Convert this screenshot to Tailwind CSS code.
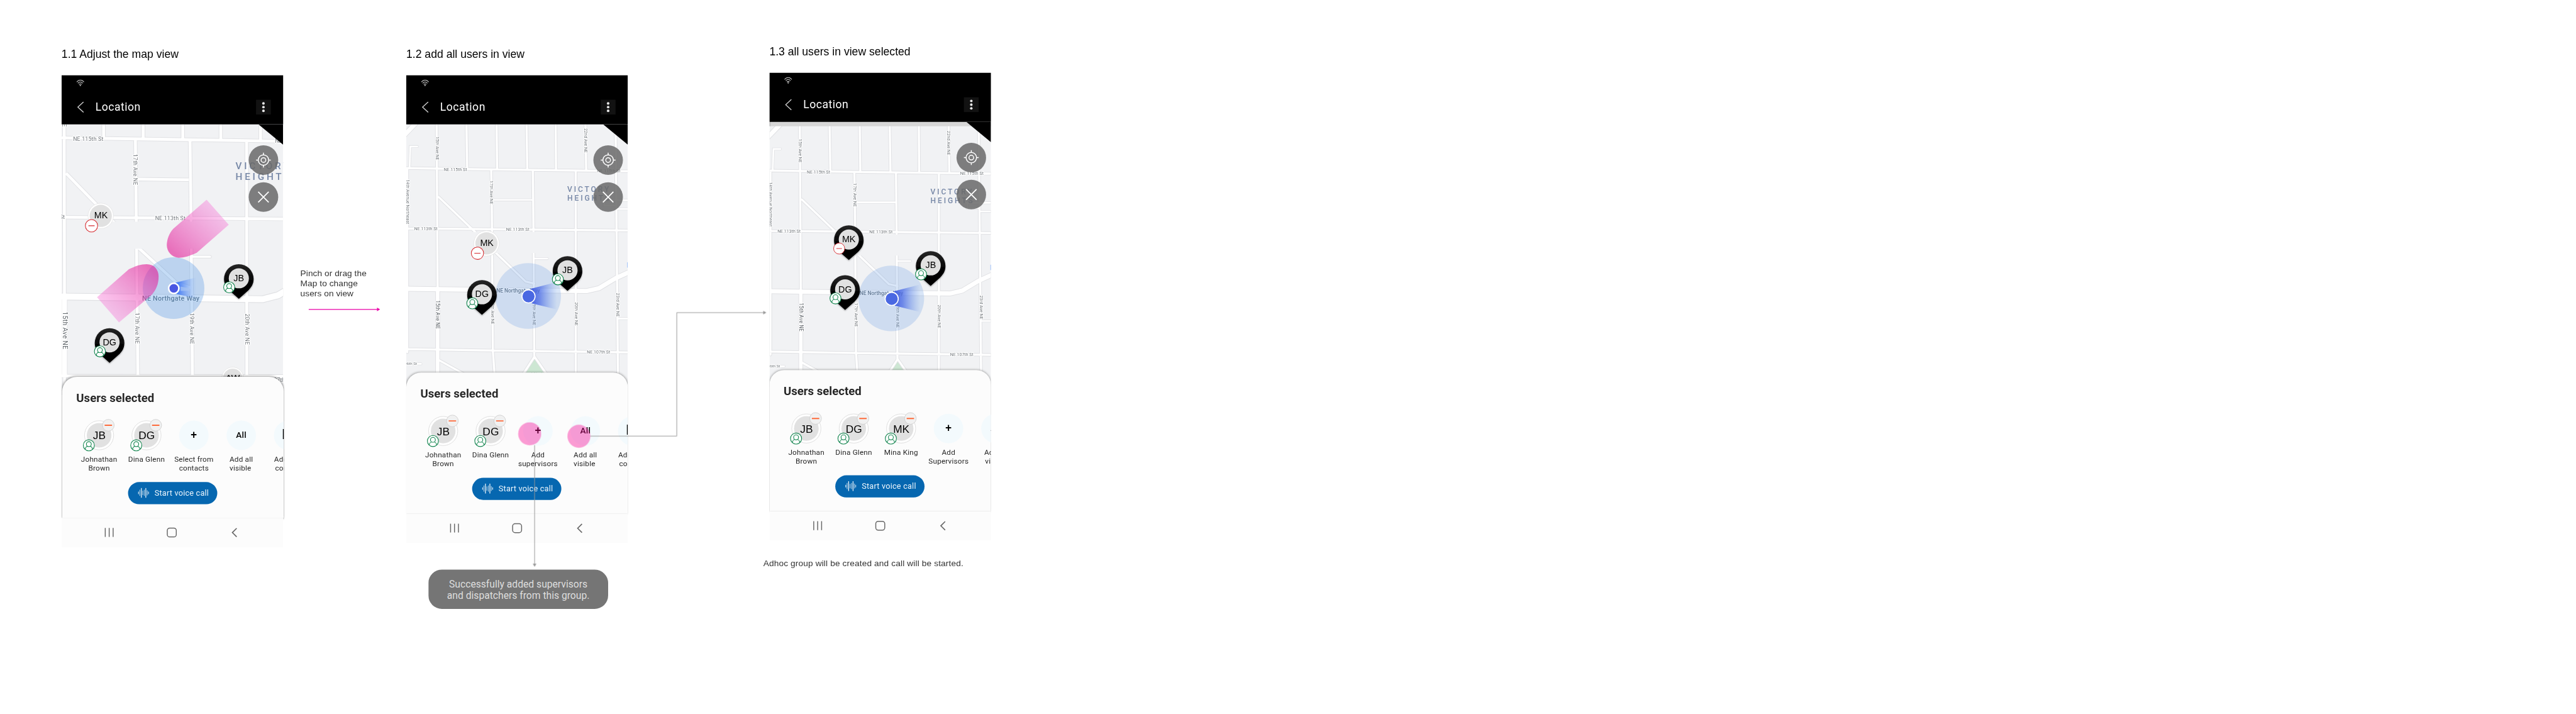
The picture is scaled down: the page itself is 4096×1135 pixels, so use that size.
<!DOCTYPE html>
<html lang="en">
<head>
<meta charset="utf-8">
<title>Location – add users flow</title>
<script src="https://cdn.jsdelivr.net/npm/@tailwindcss/browser@4"></script>
</head>
<body class="bg-white">
<svg class="absolute w-0 h-0" aria-hidden="true">
  <defs>
    <linearGradient id="pinFill" x1="0" y1="0" x2="0" y2="1"><stop offset="0" stop-color="#262626"/><stop offset=".55" stop-color="#000"/></linearGradient>
    <linearGradient id="beamA" x1="0" x2="1" y1="0" y2="0"><stop offset="0" stop-color="#2f6bf5"/><stop offset="1" stop-color="#7fa9f5" stop-opacity="0"/></linearGradient>
    <linearGradient id="beamB" x1="0" x2="1" y1="0" y2="0"><stop offset="0" stop-color="#4560e2"/><stop offset=".35" stop-color="#4f6ee6" stop-opacity=".75"/><stop offset="1" stop-color="#6f97ea" stop-opacity="0"/></linearGradient>
    <linearGradient id="pinkUp" x1="0" y1="1" x2="1" y2="0"><stop offset=".1" stop-color="#e21995" stop-opacity=".6"/><stop offset=".8" stop-color="#f673d6" stop-opacity=".4"/></linearGradient>
    <linearGradient id="pinkDown" x1="1" y1="0" x2="0" y2="1"><stop offset=".1" stop-color="#e21995" stop-opacity=".6"/><stop offset=".8" stop-color="#f673d6" stop-opacity=".4"/></linearGradient>
    <filter id="soft" x="-30%" y="-30%" width="160%" height="170%"><feDropShadow dx="0" dy="4" stdDeviation="4" flood-color="#000" flood-opacity=".35"/></filter>

    <g id="person">
      <circle r="27" fill="#fff" stroke="#13854f" stroke-width="3.4"/>
      <g fill="none" stroke="#13854f" stroke-width="3.4"><circle cy="-6" r="12"/><path d="M-18 20C-17 9-10 5-6 5M18 20C17 9 10 5 6 5"/></g>
    </g>
    <g id="pin">
      <path filter="url(#soft)" fill="url(#pinFill)" d="M0-72A72 72 0 0 1 72 0C72 28 58 44 44 58L0 97L-44 58C-58 44-72 28-72 0A72 72 0 0 1 0-72Z"/>
      <circle cy="-3" r="49" fill="#e1e1e1"/>
    </g>
    <g id="mute"><circle r="30" fill="#fff" stroke="#d62b30" stroke-width="3.2"/><path d="M-15 0H15" stroke="#d62b30" stroke-width="3.2"/></g>
    <g id="dot-avatar"><circle r="62" fill="#fff" stroke="#dedede" stroke-width="2"/><circle r="54" fill="#e1e1e1"/></g>
    <g id="avatar">
      <circle r="71" fill="#fff" stroke="#dedede" stroke-width="3"/><circle r="60" fill="#e1e1e1"/>
      <use href="#person" x="-50" y="49"/>
    </g>
    <g id="remove"><circle cx="45" cy="-49" r="28.5" fill="#f1f1f1" stroke="#cbcbcb" stroke-width="2.5"/><path d="M27-49H63" stroke="#fd6b3c" stroke-width="6"/></g>
    <g id="wifi" fill="none" stroke="#c8c8c8" stroke-width="1.1"><path d="M.6 4.2C4-.1 9.200-.1 12.400 4.200M2.600 6.300C5 3.300 8 3.300 10.400 6.300M4.500 8.200C5.700 6.800 7.300 6.800 8.500 8.200"/><circle cx="6.500" cy="9.700" r=".5" fill="#ddd"/></g>
    <g id="target" fill="none" stroke="#fff" stroke-width="1.5"><circle r="8.500"/><circle r="3.800"/><path d="M0-12V-8.500M0 8.500V12M-12 0H-8.500M8.500 0H12"/></g>
    <g id="waves" stroke="#fff" stroke-width="1.200"><path d="M1 6.500V10.500M17.400 6.500V10.500" stroke-opacity=".9"/><path d="M3.200 3.500V13.500M8 5V12M10.500 3.500V13.500M15.200 4.500V12.500" stroke-opacity=".65"/><path d="M5.700.5V16.500M12.900.5V16.500"/></g>
    <g id="nav-icons" fill="none" stroke="#676767" stroke-width="1.500"><path d="M72 16.500V31M78.400 16.500V31M84.800 16.500V31"/><rect x="172.800" y="16.700" width="14.600" height="14.400" rx="4"/><path d="M285.500 17L278.500 24L285.500 31" stroke-width="1.700"/></g>

    <path id="m1-roads" d="M13 0L15 1300M205 0V66M398 0V70M591 0V74M776 0V78M970 0V80M0 65L380 71L1080 82M360 76L364 450L372 1240M626 80L631 460L638 1240M902 84L903 1240M370 267L620 270M22 238L380 606L560 772L630 796M0 452L1080 461M0 1226L1080 1228"/>
    <path id="m1-main" d="M0 839L640 847L980 852L1055 833L1090 812"/>
    <path id="m1-stub" d="M633 645H724"/>
    <g id="m1-labels" font-family="Roboto, sans-serif" font-size="27">
      <text x="56" y="81" textLength="148">NE 115th St</text><text x="1040" y="90">NE</text>
      <text x="456" y="466" textLength="148">NE 113th St</text><text x="15" y="461" text-anchor="end">NE 113th St</text>
      <text transform="translate(3 -4) rotate(90)">E</text>
      <text transform="translate(351 144) rotate(90)" textLength="152">17th Ave NE</text>
      <text transform="translate(359 917) rotate(90)" textLength="152">17th Ave NE</text>
      <text transform="translate(625 919) rotate(90)" textLength="152">19th Ave NE</text>
      <text transform="translate(895 922) rotate(90)" textLength="152">20th Ave NE</text>
      <text transform="translate(5 912) rotate(90)" textLength="184" font-size="32" fill="#5f656a">15th Ave NE</text>
      <text x="393" y="859" textLength="279" font-size="33" font-weight="500" fill="#5f6f7b">NE Northgate Way</text>
      <text x="1035" y="1254">27th</text>
    </g>
    <path id="m2-roads" d="M148-30L153 800M293-30L297 215M440-30L443 218M586-30L590 220M728-30L730 222M873-30L877 225M1020-30L1032 1240M0 213L440 220L1080 228M5 214V1110M414 222L417 400L422 1100L432 1240M617 226L620 500L624 1136M826 228V1240M158 354L330 519L440 629L582 766L624 776M0 507L1080 517M0 1095L420 1102L1080 1111M160 1149L320 1238M625 1132L555 1240M625 1132L700 1240"/>
    <path id="m2-small" d="M54 108H20L16 212M425 368H612M960 370H1080M965 372V396H1024M1032 412H1080M628 654H688M1034 946H1080M20 1167H72"/>
    <path id="m2-main" d="M0 801L500 808L880 812L940 798L1020 750L1090 718"/>
    <path id="m2-diag" d="M-20 64L70-30"/>
    <g id="m2-labels" font-family="Roboto, sans-serif" font-size="21">
      <text x="183" y="227" textLength="113">NE 115th St</text><text x="930" y="233" textLength="114">NE 115th St</text>
      <text x="39" y="515" textLength="113">NE 113th St</text><text x="487" y="519" textLength="113">NE 113th St</text>
      <text x="881" y="1117" textLength="113">NE 107th St</text><text x="52" y="1173" text-anchor="end" font-size="19">106th St</text>
      <text transform="translate(143 59) rotate(90)" textLength="115">15th Ave NE</text>
      <text transform="translate(867 19) rotate(90)" textLength="119">22nd Ave NE</text>
      <text transform="translate(408 274) rotate(90)" textLength="115">17th Ave NE</text>
      <text transform="translate(-1 269) rotate(90)" textLength="217">14th Avenue Northeast</text>
      <text transform="translate(415 859) rotate(90)" textLength="115">17th Ave NE</text>
      <text transform="translate(617 864) rotate(90)" textLength="115">19th Ave NE</text>
      <text transform="translate(821 866) rotate(90)" textLength="115">20th Ave NE</text>
      <text transform="translate(1025 821) rotate(90)" textLength="116">23rd Ave NE</text>
      <text transform="translate(145 857) rotate(90)" textLength="140" font-size="25" fill="#5f656a">15th Ave NE</text>
      <text x="439" y="819" textLength="212" font-size="26" font-weight="500" fill="#65717c">NE Northgate Way</text>
      <text x="608" y="1224" textLength="56" font-size="24" fill="#5b9a74" stroke="none">Mint</text>
    </g>

    <g id="map-close">
      <rect y="-30" width="1080" height="1300" fill="#f1f2f4"/>
      <path d="M625 1142L540 1270H715Z" fill="#cde7d3"/>
      <g fill="none" stroke="#e0e1e4" stroke-linecap="round">
        <use href="#m2-roads" stroke-width="16"/><use href="#m2-small" stroke-width="13"/><use href="#m2-main" stroke-width="27"/><use href="#m2-diag" stroke-width="27"/><path d="M153 800V1260" stroke-width="23"/>
      </g>
      <g fill="none" stroke="#fff" stroke-linecap="round">
        <use href="#m2-roads" stroke-width="10"/><use href="#m2-small" stroke-width="8"/><use href="#m2-main" stroke-width="21"/><use href="#m2-diag" stroke-width="21"/><path d="M153 800V1260" stroke-width="17"/>
      </g>
      <rect x="200" y="525" width="580" height="102" fill="#f1f2f4"/>
      <rect x="1077" y="672" width="6" height="26" fill="#8ab4f8"/>
      <use href="#m2-labels" fill="#fff" stroke="#fff" stroke-width="6" stroke-linejoin="round"/>
      <use href="#m2-labels" fill="#74797e"/>
      <g font-family="Roboto, sans-serif" font-size="37" font-weight="500" fill="#7687a6"><text x="785" y="330" textLength="203">VICTORY</text><text x="785" y="371" textLength="206">HEIGHTS</text></g>
      <circle cx="594" cy="836" r="160" fill="#699ae4" fill-opacity=".25"/>
      <path d="M605 802L735 768V902L612 872Z" fill="url(#beamB)"/>
      <circle cx="596" cy="838" r="32" fill="#4a68e2" stroke="#fff" stroke-width="5"/>
    </g>
  </defs>
</svg>

<div class="w-[4096px] h-[1135px] overflow-hidden">
<main class="relative w-[4185px] h-[1160px] origin-top-left scale-[0.97873] font-[Roboto,sans-serif] text-[#262626]">

  <!-- 1.1 -->
  <section class="absolute left-[100px] top-[75px]">
    <h2 class="h-[47px] pt-[1px] text-[18px] leading-6 text-black font-['Liberation_Sans',sans-serif] whitespace-nowrap">1.1 Adjust the map view</h2>
    <div class="relative w-[362px] h-[767px] overflow-hidden">
      <svg class="absolute left-0 top-20 w-[360px] h-[440px]" viewBox="0 0 1080 1320">
        <rect width="1080" height="1320" fill="#f1f2f4"/>
        <g fill="none" stroke="#e0e1e4"><use href="#m1-roads" stroke-width="20"/><use href="#m1-main" stroke-width="37"/><use href="#m1-stub" stroke-width="16" stroke-linecap="round"/><path d="M14 850V1215" stroke-width="30"/></g>
        <g fill="none" stroke="#fff"><use href="#m1-roads" stroke-width="14"/><use href="#m1-main" stroke-width="30"/><use href="#m1-stub" stroke-width="10" stroke-linecap="round"/><path d="M14 850V1226" stroke-width="25"/></g>
        <rect x="40" y="474" width="800" height="132" fill="#f1f2f4"/>
        <use href="#m1-labels" fill="#fff" stroke="#fff" stroke-width="7" stroke-linejoin="round"/>
        <use href="#m1-labels" fill="#74797e"/>
        <g font-family="Roboto, sans-serif" font-size="47" font-weight="500" fill="#7687a6"><text x="848" y="219" textLength="260">VICTORY</text><text x="848" y="271" textLength="264">HEIGHTS</text></g>
        <circle cx="546" cy="798" r="150" fill="#5a9be6" fill-opacity=".35"/>
        <path d="M707 367L815 489L660 625C625 643 590 651 570 650C537 648 513 620 513 588C513 560 525 530 545 508Z" fill="url(#pinkUp)"/>
        <path d="M173 842L328 706C360 690 385 681 415 681C452 681 473 708 473 742C473 780 460 806 440 830L280 965Z" fill="url(#pinkDown)"/>
        <path d="M555 772L657 746V849L560 826Z" fill="url(#beamA)"/><path d="M580 790L625 798V811L580 812Z" fill="#a9c6f2" fill-opacity=".7"/>
        <circle cx="547" cy="799" r="25" fill="#4a57e2" stroke="#fff" stroke-width="8"/>
        <g font-family="Liberation Sans, sans-serif" font-size="44" text-anchor="middle">
          <use href="#dot-avatar" x="191" y="446"/><text x="192" y="458">MK</text><use href="#mute" x="146" y="494"/>
          <use href="#pin" x="864" y="753"/><text x="864" y="764">JB</text><use href="#person" x="817" y="794"/>
          <use href="#pin" x="234" y="1065"/><text x="234" y="1077">DG</text><use href="#person" x="187" y="1106"/>
          <g transform="translate(834 1236)"><circle r="53" fill="#fff" stroke="#dedede" stroke-width="2"/><circle r="46" fill="#e1e1e1"/><text y="16" font-size="44">AW</text></g>
        </g>
      </svg>
      <svg class="absolute left-80 top-20 w-10 h-[33px]" viewBox="0 0 40 33"><path d="M0 0H40V33Z"/></svg>
      <div class="absolute left-[304px] top-[114px] flex flex-col gap-3">
        <div class="size-12 rounded-full bg-[#686969]/85"><svg class="size-12" viewBox="-24 -24 48 48"><use href="#target"/></svg></div>
        <div class="size-12 rounded-full bg-[#686969]/85"><svg class="size-12" viewBox="-24 -24 48 48"><path d="M-8.500-8.500L8.500 8.500M8.500-8.500L-8.500 8.500" stroke="#fff" stroke-width="1.800"/></svg></div>
      </div>
      <div class="relative flex flex-col h-full">
        <header class="w-[360px] h-20 bg-black text-white flex flex-col">
          <div class="h-10 pl-6 pt-[7px]"><svg class="w-[13px] h-[11px]" viewBox="0 0 13 11"><use href="#wifi"/></svg></div>
          <div class="flex items-center h-6 pl-[25px] pr-5">
            <svg class="w-3 h-[18px]" viewBox="0 0 12 18"><path d="M10.700.5L1.500 9L10.700 17.500" fill="none" stroke="#ccc" stroke-width="1.400"/></svg>
            <span class="ml-[18px] text-[18px] leading-6 tracking-[0.5px] -mt-[1px]">Location</span>
            <svg class="ml-auto size-6 bg-[#121212]" viewBox="0 0 24 24" fill="#e6e6e6"><circle cx="12" cy="6" r="2.100"/><circle cx="12" cy="12" r="2.100"/><circle cx="12" cy="18" r="2.100"/></svg>
          </div>
        </header>
        <div class="flex-1"></div>
        <div class="relative ml-[1px] w-[360px] h-[229px] shrink-0 overflow-hidden rounded-t-[24px] bg-[#fcfcfc] shadow-[0_0_4px_rgba(0,0,0,0.4)] pt-[23px]">
          <h3 class="pl-[23px] text-[19px] leading-6 font-bold">Users selected</h3>
          <div class="mt-[18px] ml-[21.500px] flex w-[385px] text-[12px] leading-[14px] text-center tracking-[0.2px]">
            <div class="w-[77px] flex flex-col items-center"><svg class="size-[60px] mb-[2px]" viewBox="-90 -90 180 180" font-family="Liberation Sans, sans-serif" font-size="53" text-anchor="middle"><use href="#avatar"/><text x="1" y="20">JB</text><use href="#remove"/></svg>Johnathan<br>Brown</div>
            <div class="w-[77px] flex flex-col items-center"><svg class="size-[60px] mb-[2px]" viewBox="-90 -90 180 180" font-family="Liberation Sans, sans-serif" font-size="53" text-anchor="middle"><use href="#avatar"/><text x="1" y="20">DG</text><use href="#remove"/></svg>Dina Glenn</div>
            <div class="w-[77px] flex flex-col items-center"><div class="size-12 mt-1.5 mb-2 rounded-full bg-[#f3fafd] flex items-center justify-center text-[18px] font-medium text-black pb-0.5">+</div><p>Select from<br>contacts</p></div>
            <div class="w-[77px] flex flex-col items-center"><div class="size-12 mt-1.5 mb-2 rounded-full bg-[#f3fafd] flex items-center justify-center text-[14px] font-medium text-black pb-0.5">All</div><p class="text-left">Add all<br>visible</p></div>
            <div class="w-[77px] flex flex-col items-center"><div class="size-12 mt-1.5 mb-2 rounded-full bg-[#f3fafd] flex items-center pl-[13px] text-[22px] font-medium text-black pb-0.5">D</div><p class="pl-1">Add from<br>contacts</p></div>
          </div>
          <div class="mt-[15.500px] ml-[107px] w-[145px] h-9 rounded-full bg-[#0667b0] flex items-center pl-4 text-[13px] text-[#e9f3fb] tracking-[0.2px]"><svg class="w-[18px] h-[17px] mr-[9px]" viewBox="0 0 18 17"><use href="#waves"/></svg>Start voice call</div>
        </div>
        <svg class="relative w-[360px] h-12 shrink-0 bg-[#fcfcfc]" viewBox="1 0 360 48"><use href="#nav-icons"/></svg>
      </div>
    </div>
  </section>

  <!-- pinch note -->
  <div class="absolute left-[488px] top-[436px] font-['Liberation_Sans',sans-serif] text-[14px] leading-4 tracking-[0.05px] text-[#333]">
    <p class="whitespace-nowrap">Pinch or drag the<br>Map to change<br>users on view</p>
    <svg class="mt-3 ml-[13px] w-[118px] h-[12px]" viewBox="0 0 118 12"><path d="M.500 6.500H112" stroke="#ea00a7" stroke-width="1.300"/><path d="M111.500 3.500L116.500 6.500L111.500 9.500Z" fill="#ea00a7"/></svg>
  </div>

  <!-- 1.2 -->
  <section class="absolute left-[660px] top-[75px]">
    <h2 class="h-[47px] pt-[1px] text-[18px] leading-6 text-black font-['Liberation_Sans',sans-serif] whitespace-nowrap">1.2 add all users in view</h2>
    <div class="relative w-[360px] h-[760px] overflow-hidden">
      <svg class="absolute left-0 top-20 w-[360px] h-[430px]" viewBox="0 0 1080 1290">
        <use href="#map-close"/>
        <g font-family="Liberation Sans, sans-serif" font-size="44" text-anchor="middle">
          <use href="#dot-avatar" x="391" y="580"/><text x="393" y="592">MK</text><use href="#mute" x="347" y="628"/>
          <use href="#pin" x="786" y="714"/><text x="786" y="725">JB</text><use href="#person" x="739" y="755"/>
          <use href="#pin" x="369" y="831"/><text x="369" y="842">DG</text><use href="#person" x="322" y="872"/>
        </g>
      </svg>
      <svg class="absolute left-80 top-20 w-10 h-[33px]" viewBox="0 0 40 33"><path d="M0 0H40V33Z"/></svg>
      <div class="absolute left-[304px] top-[114px] flex flex-col gap-3">
        <div class="size-12 rounded-full bg-[#686969]/85"><svg class="size-12" viewBox="-24 -24 48 48"><use href="#target"/></svg></div>
        <div class="size-12 rounded-full bg-[#686969]/85"><svg class="size-12" viewBox="-24 -24 48 48"><path d="M-8.500-8.500L8.500 8.500M8.500-8.500L-8.500 8.500" stroke="#fff" stroke-width="1.800"/></svg></div>
      </div>
      <div class="relative flex flex-col h-full">
        <header class="w-[360px] h-20 bg-black text-white flex flex-col">
          <div class="h-10 pl-6 pt-[7px]"><svg class="w-[13px] h-[11px]" viewBox="0 0 13 11"><use href="#wifi"/></svg></div>
          <div class="flex items-center h-6 pl-[25px] pr-5">
            <svg class="w-3 h-[18px]" viewBox="0 0 12 18"><path d="M10.700.5L1.500 9L10.700 17.500" fill="none" stroke="#ccc" stroke-width="1.400"/></svg>
            <span class="ml-[18px] text-[18px] leading-6 tracking-[0.5px] -mt-[1px]">Location</span>
            <svg class="ml-auto size-6 bg-[#121212]" viewBox="0 0 24 24" fill="#e6e6e6"><circle cx="12" cy="6" r="2.100"/><circle cx="12" cy="12" r="2.100"/><circle cx="12" cy="18" r="2.100"/></svg>
          </div>
        </header>
        <div class="flex-1"></div>
        <div class="relative w-[360px] h-[229px] shrink-0 overflow-hidden rounded-t-[24px] bg-[#fcfcfc] shadow-[0_0_4px_rgba(0,0,0,0.4)] pt-[23px]">
          <h3 class="pl-[23px] text-[19px] leading-6 font-bold">Users selected</h3>
          <div class="mt-[18px] ml-[21.500px] flex w-[385px] text-[12px] leading-[14px] text-center tracking-[0.2px]">
            <div class="w-[77px] flex flex-col items-center"><svg class="size-[60px] mb-[2px]" viewBox="-90 -90 180 180" font-family="Liberation Sans, sans-serif" font-size="53" text-anchor="middle"><use href="#avatar"/><text x="1" y="20">JB</text><use href="#remove"/></svg>Johnathan<br>Brown</div>
            <div class="w-[77px] flex flex-col items-center"><svg class="size-[60px] mb-[2px]" viewBox="-90 -90 180 180" font-family="Liberation Sans, sans-serif" font-size="53" text-anchor="middle"><use href="#avatar"/><text x="1" y="20">DG</text><use href="#remove"/></svg>Dina Glenn</div>
            <div class="w-[77px] flex flex-col items-center"><div class="size-12 mt-1.5 mb-2 rounded-full bg-[#f3fafd] flex items-center justify-center text-[18px] font-medium text-black pb-0.5">+</div><p>Add<br>supervisors</p></div>
            <div class="w-[77px] flex flex-col items-center"><div class="size-12 mt-1.5 mb-2 rounded-full bg-[#f3fafd] flex items-center justify-center text-[14px] font-medium text-black pb-0.5">All</div><p class="text-left">Add all<br>visible</p></div>
            <div class="w-[77px] flex flex-col items-center"><div class="size-12 mt-1.5 mb-2 rounded-full bg-[#f3fafd] flex items-center pl-[13px] text-[22px] font-medium text-black pb-0.5">D</div><p class="pl-1">Add from<br>contacts</p></div>
          </div>
          <div class="mt-[15.500px] ml-[107px] w-[145px] h-9 rounded-full bg-[#0667b0] flex items-center pl-4 text-[13px] text-[#e9f3fb] tracking-[0.2px]"><svg class="w-[18px] h-[17px] mr-[9px]" viewBox="0 0 18 17"><use href="#waves"/></svg>Start voice call</div>
        </div>
        <svg class="relative w-[360px] h-12 shrink-0 bg-[#fcfcfc]" viewBox="0 0 360 48"><use href="#nav-icons"/></svg>
      </div>
    </div>
  </section>

  <!-- toast -->
  <div class="absolute left-[696px] top-[925px] w-[292px] h-[64px] rounded-[22px] bg-[#757575] flex items-center justify-center text-center text-[16px] leading-[19px] text-[#dedede]"><p class="pt-[1px]">Successfully added supervisors<br>and dispatchers from this group.</p></div>

  <!-- 1.3 -->
  <section class="absolute left-[1250px] top-[71px]">
    <h2 class="h-[47px] pt-[1px] text-[18px] leading-6 text-black font-['Liberation_Sans',sans-serif] whitespace-nowrap">1.3 all users in view selected</h2>
    <div class="relative w-[360px] h-[760px] overflow-hidden">
      <svg class="absolute left-0 top-20 w-[360px] h-[430px]" viewBox="0 0 1080 1290">
        <use href="#map-close" y="24"/>
        <rect width="1080" height="21" fill="#d6d6d6"/><rect width="3" height="21" fill="#8a8a8a"/>
        <g font-family="Liberation Sans, sans-serif" font-size="44" text-anchor="middle">
          <use href="#pin" x="387" y="576"/><text x="387" y="587">MK</text><g transform="translate(340 617) scale(.9)"><use href="#mute"/></g>
          <use href="#pin" x="786" y="702"/><text x="786" y="713">JB</text><use href="#person" x="739" y="743"/>
          <use href="#pin" x="369" y="819"/><text x="369" y="830">DG</text><use href="#person" x="322" y="860"/>
        </g>
      </svg>
      <svg class="absolute left-80 top-20 w-10 h-[33px]" viewBox="0 0 40 33"><path d="M0 0H40V33Z"/></svg>
      <div class="absolute left-[304px] top-[114px] flex flex-col gap-3">
        <div class="size-12 rounded-full bg-[#686969]/85"><svg class="size-12" viewBox="-24 -24 48 48"><use href="#target"/></svg></div>
        <div class="size-12 rounded-full bg-[#686969]/85"><svg class="size-12" viewBox="-24 -24 48 48"><path d="M-8.500-8.500L8.500 8.500M8.500-8.500L-8.500 8.500" stroke="#fff" stroke-width="1.800"/></svg></div>
      </div>
      <div class="relative flex flex-col h-full">
        <header class="w-[360px] h-20 bg-black text-white flex flex-col">
          <div class="h-10 pl-6 pt-[7px]"><svg class="w-[13px] h-[11px]" viewBox="0 0 13 11"><use href="#wifi"/></svg></div>
          <div class="flex items-center h-6 pl-[25px] pr-5">
            <svg class="w-3 h-[18px]" viewBox="0 0 12 18"><path d="M10.700.5L1.500 9L10.700 17.500" fill="none" stroke="#ccc" stroke-width="1.400"/></svg>
            <span class="ml-[18px] text-[18px] leading-6 tracking-[0.5px] -mt-[1px]">Location</span>
            <svg class="ml-auto size-6 bg-[#121212]" viewBox="0 0 24 24" fill="#e6e6e6"><circle cx="12" cy="6" r="2.100"/><circle cx="12" cy="12" r="2.100"/><circle cx="12" cy="18" r="2.100"/></svg>
          </div>
        </header>
        <div class="flex-1"></div>
        <div class="relative w-[360px] h-[229px] shrink-0 overflow-hidden rounded-t-[24px] bg-[#fcfcfc] shadow-[0_0_4px_rgba(0,0,0,0.4)] pt-[23px]">
          <h3 class="pl-[23px] text-[19px] leading-6 font-bold">Users selected</h3>
          <div class="mt-[18px] ml-[21.500px] flex w-[385px] text-[12px] leading-[14px] text-center tracking-[0.2px]">
            <div class="w-[77px] flex flex-col items-center"><svg class="size-[60px] mb-[2px]" viewBox="-90 -90 180 180" font-family="Liberation Sans, sans-serif" font-size="53" text-anchor="middle"><use href="#avatar"/><text x="1" y="20">JB</text><use href="#remove"/></svg>Johnathan<br>Brown</div>
            <div class="w-[77px] flex flex-col items-center"><svg class="size-[60px] mb-[2px]" viewBox="-90 -90 180 180" font-family="Liberation Sans, sans-serif" font-size="53" text-anchor="middle"><use href="#avatar"/><text x="1" y="20">DG</text><use href="#remove"/></svg>Dina Glenn</div>
            <div class="w-[77px] flex flex-col items-center"><svg class="size-[60px] mb-[2px]" viewBox="-90 -90 180 180" font-family="Liberation Sans, sans-serif" font-size="53" text-anchor="middle"><use href="#avatar"/><text x="1" y="20">MK</text><use href="#remove"/></svg>Mina King</div>
            <div class="w-[77px] flex flex-col items-center"><div class="size-12 mt-1.5 mb-2 rounded-full bg-[#f3fafd] flex items-center justify-center text-[18px] font-medium text-black pb-0.5">+</div><p>Add<br>Supervisors</p></div>
            <div class="w-[77px] flex flex-col items-center"><div class="size-12 mt-1.5 mb-2 rounded-full bg-[#f3fafd] flex items-center justify-center text-[14px] font-medium text-black pb-0.5">All</div><p>Add all<br>visible</p></div>
          </div>
          <div class="mt-[15.500px] ml-[107px] w-[145px] h-9 rounded-full bg-[#0667b0] flex items-center pl-4 text-[13px] text-[#e9f3fb] tracking-[0.2px]"><svg class="w-[18px] h-[17px] mr-[9px]" viewBox="0 0 18 17"><use href="#waves"/></svg>Start voice call</div>
        </div>
        <svg class="relative w-[360px] h-12 shrink-0 bg-[#fcfcfc]" viewBox="0 0 360 48"><use href="#nav-icons"/></svg>
      </div>
    </div>
    <p class="mt-[27px] -ml-[10px] font-['Liberation_Sans',sans-serif] text-[14px] leading-5 tracking-[0.130px] text-[#333] whitespace-nowrap">Adhoc group will be created and call will be started.</p>
  </section>

  <!-- connectors and tap markers -->
  <svg class="absolute left-[830px] top-[490px] w-[420px] h-[440px]" viewBox="830 490 420 440">
    <g fill="#f90091" fill-opacity=".385"><circle cx="860.500" cy="704.500" r="18.700"/><circle cx="940.500" cy="708.500" r="18.700"/></g>
    <g fill="none" stroke="#969696" stroke-width="1"><path d="M868.500 723V917"/><path d="M959 708.300H1099.500V507.700H1241"/></g>
    <path d="M865.500 915.500H871.500L868.500 920.500ZM1240 504.700V510.700L1245 507.700Z" fill="#969696"/>
  </svg>
</main>
</div>
</body>
</html>
